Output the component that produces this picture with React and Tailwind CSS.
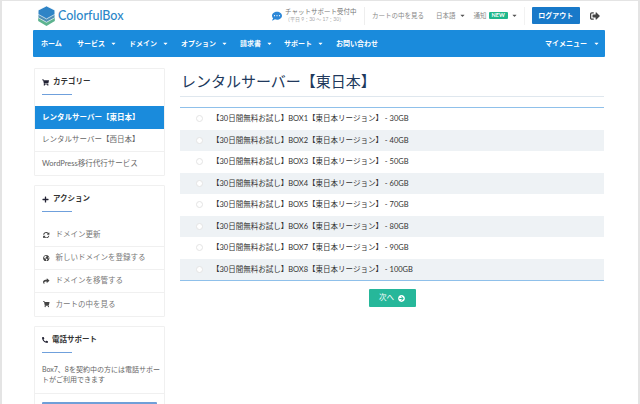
import React from "react";
import { FaShoppingCart, FaPlus, FaSyncAlt, FaGlobeAmericas, FaShare, FaPhone, FaSignOutAlt, FaCommentDots, FaArrowCircleRight, FaCaretDown } from "react-icons/fa";

const Caret = ({ c = "ml-[5px]" }) => <FaCaretDown className={"inline-block text-[7px] " + c} />;

const Logo = () => (
  <svg width="17" height="20" viewBox="0 0 20 24" className="shrink-0">
    <path d="M10 15 L20 10 V18 L10 24 L0 18 V10 Z" fill="#5db38f" />
    <path d="M10 11 L20 6.5 V14 L10 19.5 L0 14 V6.5 Z" fill="#4f8fb5" stroke="#fff" strokeWidth="0.8" />
    <path d="M10 0 L20 5 V10 L10 15.5 L0 10 V5 Z" fill="#2f84c6" stroke="#fff" strokeWidth="0.8" />
  </svg>
);

const navItems = [
  ["ホーム", false, "w-[36px]"],
  ["サービス", true, "w-[52px]"],
  ["ドメイン", true, "w-[52px]"],
  ["オプション", true, "w-[59px]"],
  ["請求書", true, "w-[44px]"],
  ["サポート", true, "w-[52px]"],
];

const plans = [
  ["BOX1", "30GB"], ["BOX2", "40GB"], ["BOX3", "50GB"], ["BOX4", "60GB"],
  ["BOX5", "70GB"], ["BOX6", "80GB"], ["BOX7", "90GB"], ["BOX8", "100GB"],
];

const actions = [
  [FaSyncAlt, "ドメイン更新"],
  [FaGlobeAmericas, "新しいドメインを登録する"],
  [FaShare, "ドメインを移管する"],
  [FaShoppingCart, "カートの中を見る"],
];

const CardHead = ({ icon: Icon, title, iconCls = "text-[7px]" }) => (
  <div className="h-[37px] pl-[7px] pt-[7px]">
    <div className="flex items-center gap-[4px] text-[7.5px] leading-[12px] font-bold text-[#333]">
      <Icon className={iconCls + " text-[#223]"} />
      <span>{title}</span>
    </div>
    <div className="mt-[6px] w-[30px] h-px bg-[#6fa0dc]" />
  </div>
);

export default function App() {
  return (
    <div
      className="w-[640px] h-[404px] overflow-hidden bg-white border-t border-l-2 border-r-[2px] border-[#e4e4e4] text-[#444]"
      style={{ fontFamily: '"Lato","Noto Sans CJK JP",sans-serif' }}
    >
      <div className="w-[572px] ml-[31px]">
        {/* Header */}
        <header className="h-[29px] flex items-center">
          <div className="flex items-center gap-[3px] ml-[5px] mt-[1px] w-[213px]">
            <Logo />
            <span className="text-[12.5px] font-medium text-[#2b86c8]">ColorfulBox</span>
          </div>
          <div className="flex items-center w-[92px] ml-[21px]">
            <FaCommentDots className="text-[#2d88d8] text-[10px] shrink-0" />
            <div className="ml-[3px] -mt-[1px] whitespace-nowrap">
              <div className="text-[6.5px] leading-[9px] text-[#777]">チャットサポート受付中</div>
              <div className="text-[5px] leading-[7px] text-[#aaa]">（平日 9：30 ～ 17：30）</div>
            </div>
          </div>
          <div className="w-px h-[18px] bg-[#eee]" />
          <span className="ml-[7px] text-[6.5px] text-[#888] whitespace-nowrap">カートの中を見る</span>
          <span className="ml-[12px] text-[6.5px] text-[#888] whitespace-nowrap flex items-center">日本語<Caret c="ml-[3px] text-[#555]" /></span>
          <span className="ml-[8px] text-[6.5px] text-[#888] whitespace-nowrap flex items-center">
            通知
            <span className="ml-[2px] bg-[#1fb78c] text-white text-[5.5px] font-bold leading-[7px] px-[3px] rounded-[1px]">NEW</span>
            <Caret c="ml-[3px] text-[#555]" />
          </span>
          <div className="w-px h-[18px] bg-[#f2f2f2] ml-[6px]" />
          <button className="ml-[7px] w-[48px] h-[17px] bg-[#1879c9] text-white text-[7px] font-bold rounded-[1px]">ログアウト</button>
          <FaSignOutAlt className="ml-[10px] text-[#444] text-[10px]" />
        </header>

        {/* Nav */}
        <nav className="h-[27px] bg-[#1a8bdc] flex items-center text-white text-[7px] font-bold pl-[8px] pr-[5px] rounded-[1px]">
          {navItems.map(([t, c, w]) => (
            <span key={t} className={"whitespace-nowrap flex items-center " + w}>
              {t}{c && <Caret />}
            </span>
          ))}
          <span className="whitespace-nowrap">お問い合わせ</span>
          <span className="ml-auto whitespace-nowrap flex items-center">マイメニュー<Caret c="ml-[6px]" /></span>
        </nav>

        <div className="flex mt-[11px]">
          {/* Sidebar */}
          <aside className="w-[131px] ml-[1px] flex flex-col gap-[9px] shrink-0">
            <section className="border border-[#f0f0f0] rounded-[1px]">
              <CardHead icon={FaShoppingCart} title="カテゴリー" />
              <div className="h-[23px] bg-[#1a8bdc] text-white font-bold text-[7.5px] flex items-center pl-[7px] whitespace-nowrap">レンタルサーバー【東日本】</div>
              <div className="h-[23px] text-[7.5px] text-[#666] flex items-center pl-[7px] border-b border-[#f0f0f0] whitespace-nowrap">レンタルサーバー【西日本】</div>
              <div className="h-[23px] text-[7.5px] text-[#666] flex items-center pl-[7px] whitespace-nowrap">WordPress移行代行サービス</div>
            </section>

            <section className="border border-[#f0f0f0] rounded-[1px]">
              <CardHead icon={FaPlus} title="アクション" />
              <div className="pt-px">
                {actions.map(([Icon, t], i) => (
                  <div key={t} className={"h-[23px] flex items-center pl-[8px] gap-[6px] text-[7.5px] text-[#777] whitespace-nowrap " + (i < 3 ? "border-b border-[#f0f0f0]" : "")}>
                    <Icon className="text-[6.5px] text-[#444] shrink-0" />
                    <span>{t}</span>
                  </div>
                ))}
              </div>
            </section>

            <section className="border border-[#f0f0f0] rounded-[1px] h-[90px]">
              <CardHead icon={FaPhone} title="電話サポート" iconCls="text-[6px] -scale-x-100" />
              <p className="px-[7px] text-[7px] leading-[10px] text-[#666] whitespace-nowrap">Box7、8を契約中の方には電話サポー<br />トがご利用できます</p>
              <div className="mt-[9px] border-t border-[#f0f0f0] pt-[8px] px-[7px]">
                <div className="h-[4px] bg-[#6f9fd8] rounded-t-[1px]" />
              </div>
            </section>
          </aside>

          {/* Main */}
          <main className="ml-[15px] w-[424px]">
            <h1 className="text-[15px] leading-[24px] font-normal text-[#21395c] mt-[1px] pl-[1px]">レンタルサーバー【東日本】</h1>
            <div className="h-px bg-[#dfe7ee] mt-[3px]" />
            <div className="mt-[10px] border-t border-b border-[#8fc0ea]">
              {plans.map(([b, g], i) => (
                <div key={b} className={"h-[21.5px] flex items-center text-[7.5px] text-[#333] " + (i % 2 ? "bg-[#eef2f5]" : "")}>
                  <span className="ml-[16px] w-[7px] h-[7px] rounded-full bg-white border border-[#e4e4e4] shrink-0" />
                  <span className="ml-[9px] whitespace-nowrap">【30日間無料お試し】{b}【東日本リージョン】 - {g}</span>
                </div>
              ))}
            </div>
            <div className="flex justify-center mt-[8px]">
              <button className="w-[47px] h-[18px] bg-[#26b79a] text-white text-[7.5px] flex items-center justify-center gap-[4px] rounded-[1px]">
                次へ <FaArrowCircleRight className="text-[7px]" />
              </button>
            </div>
          </main>
        </div>
      </div>
    </div>
  );
}
